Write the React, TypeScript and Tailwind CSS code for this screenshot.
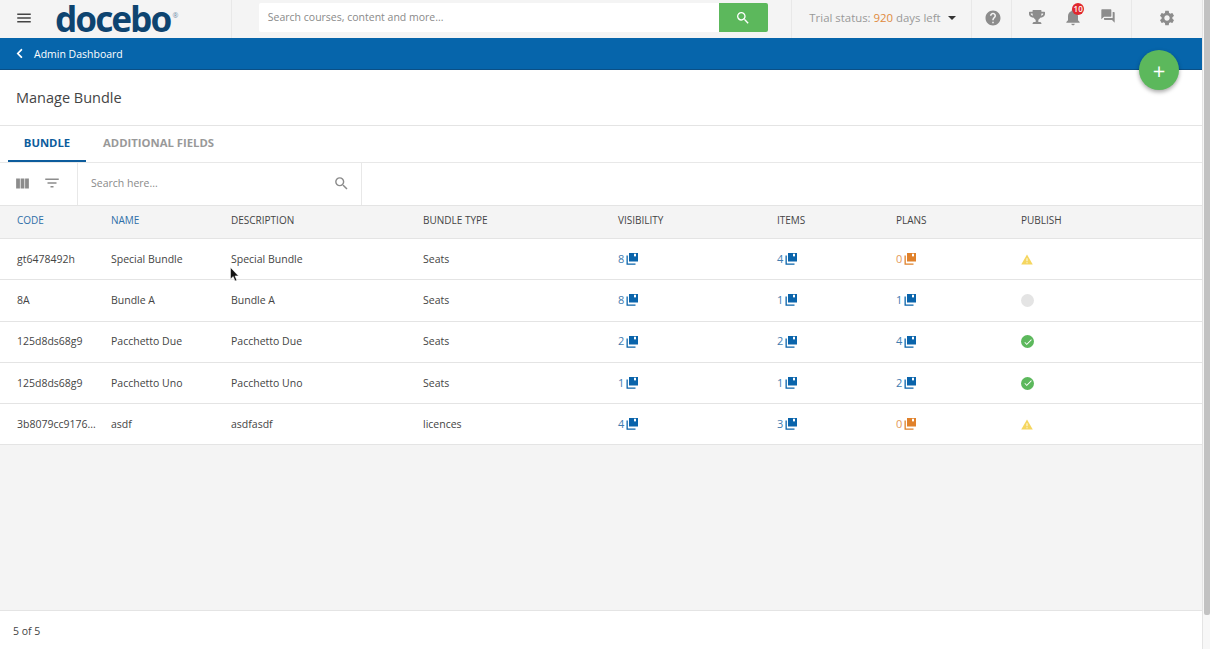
import { MdCheck, MdFilterList, MdForum, MdHelp, MdMenu, MdNotifications, MdSearch, MdSettings, MdViewColumn } from 'react-icons/md';
import { FaChevronLeft, FaTrophy } from 'react-icons/fa';

type Status = 'warn' | 'off' | 'ok';
type Row = { code: string; name: string; type: string; vis: number; items: number; plans: number; status: Status };

const ROWS: Row[] = [
  { code: 'gt6478492h', name: 'Special Bundle', type: 'Seats', vis: 8, items: 4, plans: 0, status: 'warn' },
  { code: '8A', name: 'Bundle A', type: 'Seats', vis: 8, items: 1, plans: 1, status: 'off' },
  { code: '125d8ds68g9', name: 'Pacchetto Due', type: 'Seats', vis: 2, items: 2, plans: 4, status: 'ok' },
  { code: '125d8ds68g9', name: 'Pacchetto Uno', type: 'Seats', vis: 1, items: 1, plans: 2, status: 'ok' },
  { code: '3b8079cc9176...', name: 'asdf', type: 'licences', vis: 4, items: 3, plans: 0, status: 'warn' },
];

const COLS = 'grid grid-cols-[94px_120px_192px_195px_159px_119px_125px_1fr] pl-[17px] items-center';

function Count({ n }: { n: number }) {
  const zero = n === 0;
  return (
    <span className={`flex items-center gap-[2px] text-[11px] ${zero ? 'text-[#e49a58]' : 'text-[#3f7cb0]'}`}>
      {n}
      <svg width="12" height="12" viewBox="0 0 12 12" className={zero ? 'text-[#e0812b]' : 'text-[#0a64ab]'} fill="currentColor">
        <path d="M3 0h9v8.500H3z M8 0.800v3l1-0.700 1 0.700V0.800z" fillRule="evenodd" />
        <path d="M0.500 2.500h1.300v8h7.700v1.300H0.500z" />
      </svg>
    </span>
  );
}

function StatusIcon({ status }: { status: Status }) {
  if (status === 'warn') {
    return (
      <svg width="12" height="11" viewBox="0 0 13 12" className="block">
        <path d="M6.500 0.500 12.800 11.500H0.200z" fill="#f5d65f" />
        <path d="M6 4.500h1v3.500H6zM6 9h1v1H6z" fill="#fff" />
      </svg>
    );
  }
  if (status === 'off') return <span className="block h-[13px] w-[13px] rounded-full bg-[#e4e4e4]" />;
  return (
    <span className="flex h-[13px] w-[13px] items-center justify-center rounded-full bg-[#5cb85c] text-white">
      <MdCheck size={10} />
    </span>
  );
}

export default function App() {
  return (
    <div className="relative flex h-[649px] w-[1210px] overflow-hidden bg-white font-['Open_Sans',sans-serif] text-[#444]">
      <div className="flex h-full w-[1202px] flex-col">
        {/* top bar */}
        <header className="flex h-[38px] items-stretch bg-[#f4f4f4]">
          <div className="flex w-[232px] items-center border-r border-[#e8e8e8] pl-[15px]">
            <MdMenu size={18} className="mb-[2px] text-[#444]" />
            <span className="ml-[22px] font-['Noto_Sans',sans-serif] text-[35px] leading-[38px] font-bold tracking-[-1.900px] text-[#0e4470]">docebo</span>
            <span className="mb-[8px] ml-[2px] text-[7px] leading-none text-[#6f8ea8]">®</span>
          </div>
          <div className="flex w-[561px] items-center border-r border-[#e8e8e8] pb-[3px] pl-[27px]">
            <div className="flex h-[29px] w-[509px] overflow-hidden rounded-[2px]">
              <span className="flex w-[460px] items-center bg-white pl-[9px] text-[10.500px] text-[#8a8a8a]">Search courses, content and more...</span>
              <span className="flex w-[49px] items-center justify-center bg-[#5cb85c] text-white"><MdSearch size={16} /></span>
            </div>
          </div>
          <div className="flex w-[180px] items-center border-r border-[#e8e8e8] pb-[2px] pl-[17px] text-[11.400px] text-[#999]">
            Trial status:&nbsp;<span className="text-[#e08a3c]">920</span>&nbsp;days left
            <span className="ml-[7px] h-0 w-0 border-x-[4px] border-t-[4px] border-x-transparent border-t-[#333]" />
          </div>
          <div className="flex w-[40px] items-center justify-center border-r border-[#e8e8e8] pb-[2px] pl-[2px] text-[#8c8c8c]"><MdHelp size={18} /></div>
          <div className="relative w-[120px] border-r border-[#e8e8e8] text-[#8c8c8c]">
            <FaTrophy size={16} className="absolute left-[17px] top-[9px]" />
            <MdNotifications size={20} className="absolute left-[51px] top-[7px]" />
            <span className="absolute left-[60px] top-[3px] flex h-[12px] w-[12px] items-center justify-center rounded-full bg-[#e0282e] text-[8px] font-semibold text-white">10</span>
            <MdForum size={16} className="absolute left-[88px] top-[8px]" />
          </div>
          <div className="flex w-[70px] items-center justify-center pb-[2px] text-[#8c8c8c]"><MdSettings size={18} /></div>
        </header>

        {/* breadcrumb */}
        <div className="flex h-[32px] items-center border-b border-[#0a4f86] bg-[#0665ab] pl-[14px] text-[10.500px] text-white">
          <FaChevronLeft size={11} />
          <span className="ml-[9px] pt-[2px]">Admin Dashboard</span>
        </div>

        <div className="flex h-[56px] items-center border-b border-[#e4e4e4] pl-[16px] text-[14.500px] text-[#444]">Manage Bundle</div>

        {/* tabs */}
        <div className="flex h-[37px] border-b border-[#e8e8e8] pl-[8px] text-[11.300px] font-bold">
          <span className="flex w-[78px] items-center justify-center border-b-2 border-[#0d5c9c] text-[#0d5c9c]">BUNDLE</span>
          <span className="ml-[17px] flex items-center pb-[2px] text-[#999]">ADDITIONAL FIELDS</span>
        </div>

        {/* toolbar */}
        <div className="flex h-[42px] items-stretch">
          <div className="flex w-[78px] items-center border-r border-[#e8e8e8] pb-[2px] pl-[14px] text-[#8c8c8c]">
            <MdViewColumn size={17} />
            <MdFilterList size={18} className="ml-[12px]" />
          </div>
          <div className="flex w-[284px] items-center justify-between border-r border-[#e8e8e8] pb-[1px] pl-[13px] pr-[11px] text-[10.500px] text-[#8a8a8a]">
            Search here...
            <MdSearch size={17} />
          </div>
        </div>

        {/* table */}
        <div className={`${COLS} h-[34px] border-y border-[#e4e4e4] bg-[#f4f4f4] pb-[4px] text-[10px] leading-[14px] font-medium text-[#444]`}>
          <span className="text-[#2f6fa8]">CODE</span>
          <span className="text-[#2f6fa8]">NAME</span>
          <span>DESCRIPTION</span>
          <span>BUNDLE TYPE</span>
          <span>VISIBILITY</span>
          <span>ITEMS</span>
          <span>PLANS</span>
          <span>PUBLISH</span>
        </div>
        {ROWS.map((r, i) => (
          <div key={i} className={`${COLS} h-[41.300px] border-b border-[#e4e4e4] text-[10.500px] text-[#444]`}>
            <span className="pt-[1px]">{r.code}</span>
            <span className="pt-[1px]">{r.name}</span>
            <span className="pt-[1px]">{r.name === 'asdf' ? 'asdfasdf' : r.name}</span>
            <span className="pt-[1px]">{r.type}</span>
            <Count n={r.vis} />
            <Count n={r.items} />
            <Count n={r.plans} />
            <span><StatusIcon status={r.status} /></span>
          </div>
        ))}

        <div className="flex-1 bg-[#f4f4f4]" />
        <div className="flex h-[39px] items-center border-t border-[#e4e4e4] pl-[13px] pt-[3px] text-[10.500px] text-[#444]">5 of 5</div>
      </div>

      {/* scrollbar */}
      <div className="flex h-full w-[8px] flex-col border-l border-[#e4e4e4] bg-[#f7f7f7]">
        <div className="ml-[1px] h-[615px] w-[6px] rounded-b-[2px] bg-[#c2c2c2]" />
      </div>

      {/* add button */}
      <div className="absolute left-[1139px] top-[50px] flex h-[40px] w-[40px] items-center justify-center rounded-full bg-[#5cb85c] text-[22px] leading-none font-normal text-white shadow-[0_2px_4px_rgba(0,0,0,0.35)]">+</div>

      {/* mouse pointer */}
      <svg width="9" height="15" viewBox="0 0 9 15" className="absolute left-[230px] top-[267px]">
        <path d="M0.500 0.500v11.500l2.700-2.500 1.800 4.500 1.800-0.800-1.800-4.300h3.500z" fill="#111" stroke="#fff" strokeWidth="0.500" />
      </svg>
    </div>
  );
}
